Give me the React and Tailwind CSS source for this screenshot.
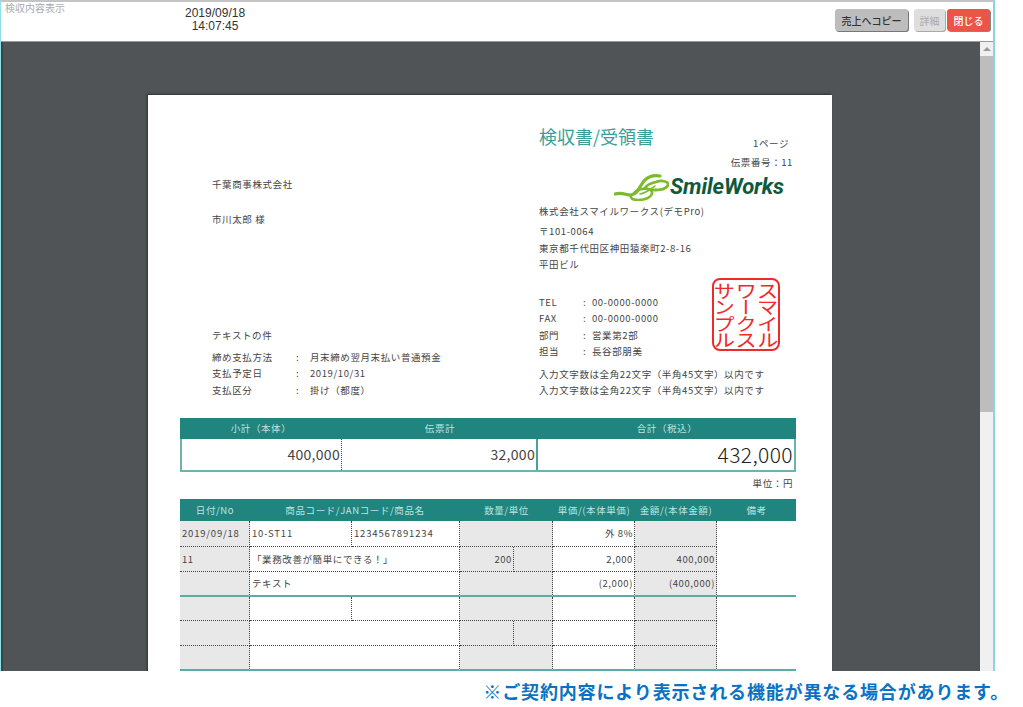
import React from 'react';

const Line = ({ label, value, labelW, colonW }) => (
  <div className="flex h-4 items-center">
    <span className={labelW}>{label}</span>
    <span className={colonW}>:</span>
    <span>{value}</span>
  </div>
);

const Logo = () => (
  <div className="mr-[9px] flex h-7 items-center justify-end">
    <svg width="55" height="28" viewBox="0 0 55 28" fill="none" stroke="#7cbb2a" strokeLinecap="round" strokeLinejoin="round">
      <path d="M1 21 C8 19 12 22 17 22 C25 21 26 11 31 7 C35 3 40 2 46 3" strokeWidth="3.2" />
      <path d="M17 22 C15 28 27 28 34 25 C39 22 40 17 34 16 C28 15 22 17 20 20" strokeWidth="2.6" />
      <path d="M33 16 C42 18 52 17 54 12 C55 8 47 7 42 9 C37 10 33 12 31 15" strokeWidth="2.8" />
      <path d="M26 21 C33 20 36 17 41 13" strokeWidth="1.6" />
    </svg>
    <span className="ml-[1px] font-['Roboto',sans-serif] text-[22px] leading-7 font-bold tracking-[-0.1px] text-[#0d5a3e] italic">SmileWorks</span>
  </div>
);

const Stamp = () => (
  <div className="absolute top-[183px] left-[564px] flex h-[73px] w-[68px] items-center justify-center rounded-lg border-2 border-[#ee2b2b]">
    <div className="scale-x-120 text-[18px] leading-[18px] tracking-[-1.5px] text-[#ee2b2b] [writing-mode:vertical-rl]">
      スマイル<br />ワークス<br />サンプル
    </div>
  </div>
);

const dot = 'border-r border-b border-dotted border-[#444]';
const teal = 'border-r border-b-2 border-r-[#444] border-b-[#5aaca7] [border-right-style:dotted] [border-bottom-style:solid]';
const grey = 'bg-[#e8e8e8]';

const Cell = ({ className = '', children }) => (
  <div className={`flex items-center overflow-hidden pr-[1px] pl-[2px] whitespace-nowrap ${className}`}>{children}</div>
);

const Head = ({ children }) => (
  <div className="flex h-[22px] items-center justify-center whitespace-nowrap">{children}</div>
);

export default function App() {
  return (
    <div className="flex h-[707px] w-[1023px] flex-col overflow-hidden bg-white font-['Noto_Sans_CJK_JP',sans-serif] text-[9.5px] tracking-[0.6px] text-[#444]">
      <div className="flex h-[671px] w-[995px] flex-col border-t-2 border-r-2 border-l border-t-[#c4c4c4] border-r-[#8fd3dc] border-l-[#8fe0e8]">
        {/* ヘッダー */}
        <div className="flex h-[40px] shrink-0 items-start border-b border-[#999]">
          <div className="w-[100px] pl-1 text-[10px] leading-[12px] tracking-normal text-[#aaa]">検収内容表示</div>
          <div className="mt-[5px] ml-[84px] w-[60px] text-center font-['Liberation_Sans',sans-serif] text-[12px] leading-[13px] tracking-normal text-[#333]">
            2019/09/18<br />14:07:45
          </div>
          <div className="mt-[7px] mr-[3px] ml-auto flex gap-[2px] text-[10px] tracking-normal">
            <button className="mr-1 h-[22px] w-[73px] rounded-[3px] bg-[#bdbdbd] font-medium text-[#333] shadow-[1px_1px_0_#777]">売上へコピー</button>
            <button className="h-[22px] w-[31px] rounded-[3px] bg-[#dedede] text-[#aaa] shadow-[1px_1px_0_#aaa]">詳細</button>
            <button className="h-[22px] w-[43px] rounded-[3px] bg-[#ea5548] font-medium text-white shadow-[1px_1px_0_#888]">閉じる</button>
          </div>
        </div>

        <div className="flex min-h-0 flex-1">
          <div className="min-h-0 flex-1 overflow-hidden border-l-2 border-[#3f4244] bg-[#505456] pt-[53px] pl-[145px]">
            {/* 帳票 */}
            <div className="relative h-[700px] w-[684px] bg-white shadow-[-1px_-1px_2px_#333]">
              <div className="grid h-[323px] grid-cols-[391px_293px]">
                <div className="pt-[81px] pl-16">
                  <div className="h-4 leading-4">千葉商事株式会社</div>
                  <div className="mt-[19px] h-4 leading-4">市川太郎 様</div>
                  <div className="mt-[100px] h-4 leading-4">テキストの件</div>
                  <div className="mt-[6px] flex flex-col gap-[0.5px]">
                    <Line label="締め支払方法" value="月末締め翌月末払い普通預金" labelW="w-[84px]" colonW="w-[14px]" />
                    <Line label="支払予定日" value="2019/10/31" labelW="w-[84px]" colonW="w-[14px]" />
                    <Line label="支払区分" value="掛け（都度）" labelW="w-[84px]" colonW="w-[14px]" />
                  </div>
                </div>

                <div className="pr-[39px]">
                  <div className="flex h-[75px] justify-between pt-[31px]">
                    <div className="text-[18px] leading-5 tracking-normal text-[#3a9f99]">検収書/受領書</div>
                    <div className="pt-[9px] text-right">
                      <div className="mr-1 h-4 leading-4">1ページ</div>
                      <div className="mt-[3px] h-4 leading-4">伝票番号：11</div>
                    </div>
                  </div>
                  <div className="mt-[3px]"><Logo /></div>
                  <div className="mt-[2px] h-4 leading-4">株式会社スマイルワークス(デモPro)</div>
                  <div className="mt-1 h-4 leading-4">〒101-0064</div>
                  <div className="mt-[1px] h-4 leading-4">東京都千代田区神田猿楽町2-8-16</div>
                  <div className="h-4 leading-4">平田ビル</div>
                  <div className="mt-[22px] flex flex-col gap-[0.5px]">
                    <Line label="TEL" value="00-0000-0000" labelW="w-[44px]" colonW="w-[9px]" />
                    <Line label="FAX" value="00-0000-0000" labelW="w-[44px]" colonW="w-[9px]" />
                    <Line label="部門" value="営業第2部" labelW="w-[44px]" colonW="w-[9px]" />
                    <Line label="担当" value="長谷部朋美" labelW="w-[44px]" colonW="w-[9px]" />
                  </div>
                  <div className="mt-[6px] h-4 leading-4 whitespace-nowrap">入力文字数は全角22文字（半角45文字）以内です</div>
                  <div className="h-4 leading-4 whitespace-nowrap">入力文字数は全角22文字（半角45文字）以内です</div>
                </div>
              </div>
              <Stamp />

              <div className="ml-8 w-[616px]">
                {/* 合計 */}
                <div className="grid grid-cols-[162px_196px_258px] bg-[#20857f] text-[#bfe3e0]">
                  <div className="flex h-[21px] items-center justify-center">小計（本体）</div>
                  <div className="flex h-[21px] items-center justify-center">伝票計</div>
                  <div className="flex h-[21px] items-center justify-center">合計（税込）</div>
                </div>
                <div className="grid grid-cols-[160px_196px_256px] border-x-2 border-b-2 border-[#6db3ae]">
                  <div className="flex h-[31px] items-center justify-end border-r border-dotted border-[#444] pr-[1px] text-[14px] tracking-[0.3px]">400,000</div>
                  <div className="flex h-[31px] items-center justify-end border-r-2 border-[#4f9f9a] pr-[1px] text-[14px] tracking-[0.3px]">32,000</div>
                  <div className="flex h-[31px] items-center justify-end pr-[1px] text-[21px] font-light tracking-[0.4px] text-[#222]">432,000</div>
                </div>
                <div className="mt-1 mr-[3px] h-[14px] text-right leading-[14px]">単位：円</div>

                {/* 明細 */}
                <div className="mt-[9px] grid grid-cols-[70px_210px_93px_82px_82px_79px] bg-[#20857f] text-[#bfe3e0]">
                  <Head>日付/No</Head>
                  <Head>商品コード/JANコード/商品名</Head>
                  <Head>数量/単位</Head>
                  <Head>単価/(本体単価)</Head>
                  <Head>金額/(本体金額)</Head>
                  <Head>備考</Head>
                </div>
                <div className="grid grid-cols-[70px_102px_108px_54px_39px_82px_82px_79px] grid-rows-[26px_25px_25px_24px_25px_25px]">
                  {/* 1行目 */}
                  <Cell className={`${grey} ${dot} tracking-[0.8px]`}>2019/09/18</Cell>
                  <Cell className={`${dot} tracking-[0.8px]`}>10-ST11</Cell>
                  <Cell className={`${dot} tracking-[0.85px]`}>1234567891234</Cell>
                  <Cell className={`col-span-2 ${grey} ${dot}`}></Cell>
                  <Cell className={`justify-end ${dot}`}>外 8%</Cell>
                  <Cell className={`${grey} ${dot}`}></Cell>
                  <Cell></Cell>
                  {/* 2行目 */}
                  <Cell className={`${grey} ${dot}`}>11</Cell>
                  <Cell className={`col-span-2 ${dot}`}>「業務改善が簡単にできる！」</Cell>
                  <Cell className={`justify-end ${grey} ${dot}`}>200</Cell>
                  <Cell className={`${grey} ${dot}`}></Cell>
                  <Cell className={`justify-end ${dot}`}>2,000</Cell>
                  <Cell className={`justify-end ${grey} ${dot}`}>400,000</Cell>
                  <Cell></Cell>
                  {/* 3行目 */}
                  <Cell className={`${grey} ${teal}`}></Cell>
                  <Cell className={`col-span-2 ${teal}`}>テキスト</Cell>
                  <Cell className={`col-span-2 ${grey} ${teal}`}></Cell>
                  <Cell className={`justify-end ${teal}`}>(2,000)</Cell>
                  <Cell className={`justify-end ${grey} ${teal}`}>(400,000)</Cell>
                  <Cell className="border-b-2 border-[#5aaca7]"></Cell>
                  {/* 4行目 */}
                  <Cell className={`${grey} ${dot}`}></Cell>
                  <Cell className={dot}></Cell>
                  <Cell className={dot}></Cell>
                  <Cell className={`col-span-2 ${grey} ${dot}`}></Cell>
                  <Cell className={dot}></Cell>
                  <Cell className={`${grey} ${dot}`}></Cell>
                  <Cell></Cell>
                  {/* 5行目 */}
                  <Cell className={`${grey} ${dot}`}></Cell>
                  <Cell className={`col-span-2 ${dot}`}></Cell>
                  <Cell className={`${grey} ${dot}`}></Cell>
                  <Cell className={`${grey} ${dot}`}></Cell>
                  <Cell className={dot}></Cell>
                  <Cell className={`${grey} ${dot}`}></Cell>
                  <Cell></Cell>
                  {/* 6行目 */}
                  <Cell className={`${grey} ${teal}`}></Cell>
                  <Cell className={`col-span-2 ${teal}`}></Cell>
                  <Cell className={`col-span-2 ${grey} ${teal}`}></Cell>
                  <Cell className={teal}></Cell>
                  <Cell className={`${grey} ${teal}`}></Cell>
                  <Cell className="border-b-2 border-[#5aaca7]"></Cell>
                </div>
              </div>
            </div>
          </div>

          {/* スクロールバー */}
          <div className="flex w-[13px] shrink-0 flex-col items-center bg-[#f0f0f0]">
            <div className="mt-[5px] h-0 w-0 border-x-[4px] border-b-[4px] border-x-transparent border-b-[#999]"></div>
            <div className="mt-[5px] h-[356px] w-full bg-[#bdbdbd]"></div>
          </div>
        </div>
      </div>

      <div className="flex flex-1 items-center justify-end pt-[5px] pr-[14px] text-[18px] font-bold tracking-[0.85px] text-[#0a72c4]">
        ※ご契約内容により表示される機能が異なる場合があります。
      </div>
    </div>
  );
}
